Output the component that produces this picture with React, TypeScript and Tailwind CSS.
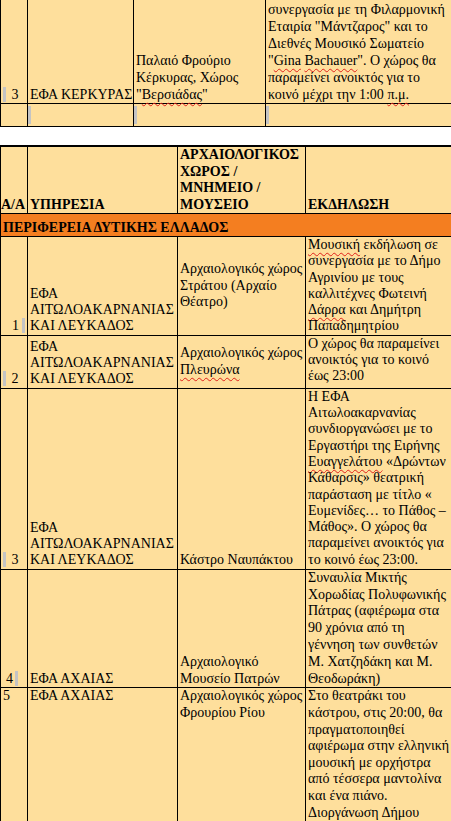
import { ReactNode } from "react";

const Sp = ({ children }: { children: ReactNode }) => (
    <span className="underline decoration-wavy decoration-[#e0201a] decoration-1 underline-offset-[3px]">{children}</span>
);

const Mark = () => <span className="inline-block w-[3px] h-[15px] bg-[#c4c4c4] align-[-3px]" />;

const Lines = ({ lines }: { lines: ReactNode[] }) => (
    <>
        {lines.map((l, i) => (
            <div key={i} className="whitespace-nowrap">
                {l}
            </div>
        ))}
    </>
);

const td = "border border-black px-[2px] py-0";

export default function App() {
    return (
        <div className="w-[451px] h-[821px] overflow-hidden bg-white text-black font-[family-name:Liberation_Serif,serif] text-[14px] leading-[16.3px]">
            {/* tail of previous table */}
            <table className="border-collapse table-fixed w-[458px] -mt-[17px] bg-[#fedf9c] leading-[17px]">
                <colgroup>
                    <col className="w-[27px]" />
                    <col className="w-[106px]" />
                    <col className="w-[132px]" />
                    <col className="w-[193px]" />
                </colgroup>
                <tbody>
                    <tr className="h-[120px]">
                        <td className={`${td} align-bottom whitespace-nowrap`}>
                            <Mark /> <span className="ml-[2px]">3</span>
                        </td>
                        <td className={`${td} align-bottom whitespace-nowrap`}>ΕΦΑ ΚΕΡΚΥΡΑΣ</td>
                        <td className={`${td} align-bottom`}>
                            <Lines lines={["Παλαιό Φρούριο", "Κέρκυρας, Χώρος", <>"<Sp>Βερσιάδας</Sp>"</>]} />
                        </td>
                        <td className={`${td} align-bottom`}>
                            <Lines
                                lines={[
                                    "Συναυλία στο Φρούριο, σε",
                                    "συνεργασία με τη Φιλαρμονική",
                                    'Εταιρία "Μάντζαρος" και το',
                                    "Διεθνές Μουσικό Σωματείο",
                                    <>"<Sp>Gina</Sp> <Sp>Bachauer</Sp>". Ο χώρος θα</>,
                                    "παραμείνει ανοικτός για το",
                                    <>κοινό μέχρι την 1:00 <Sp>π.μ.</Sp></>,
                                ]}
                            />
                        </td>
                    </tr>
                    <tr className="h-[23px]">
                        <td className="border border-black p-0"></td>
                        <td className="border border-black p-0 align-middle">
                            <div className="w-[3px] h-[18px] bg-[#c4c4c4]" />
                        </td>
                        <td className="border border-black p-0 align-middle">
                            <div className="w-[3px] h-[18px] bg-[#c4c4c4]" />
                        </td>
                        <td className="border border-black p-0 align-middle">
                            <div className="w-[3px] h-[18px] bg-[#c4c4c4]" />
                        </td>
                    </tr>
                </tbody>
            </table>

            <div className="h-[18px]" />

            <table className="border-collapse table-fixed w-[455px] bg-[#fedf9c] border-t-2 border-black">
                <colgroup>
                    <col className="w-[27px]" />
                    <col className="w-[150px]" />
                    <col className="w-[128px]" />
                    <col className="w-[150px]" />
                </colgroup>
                <tbody>
                    <tr className="h-[66px] font-bold leading-[16.5px]">
                        <td className="border border-black p-0 align-bottom whitespace-nowrap">Α/Α</td>
                        <td className={`${td} align-bottom`}>ΥΠΗΡΕΣΙΑ</td>
                        <td className={`${td} align-bottom`}>
                            <Lines lines={["ΑΡΧΑΙΟΛΟΓΙΚΟΣ", "ΧΩΡΟΣ /", "ΜΝΗΜΕΙΟ /", "ΜΟΥΣΕΙΟ"]} />
                        </td>
                        <td className={`${td} align-bottom`}>ΕΚΔΗΛΩΣΗ</td>
                    </tr>
                    <tr className="h-[23px] bg-[#f47e20] font-bold">
                        <td colSpan={4} className="border border-black px-[2px] py-0 align-bottom whitespace-nowrap">
                            ΠΕΡΙΦΕΡΕΙΑ ΔΥΤΙΚΗΣ ΕΛΛΑΔΟΣ
                        </td>
                    </tr>
                    <tr className="h-[98px]">
                        <td className={`${td} align-bottom text-right whitespace-nowrap`}>
                            1<span className="ml-[3px]"><Mark /></span>
                        </td>
                        <td className={`${td} align-bottom`}>
                            <Lines lines={["ΕΦΑ", "ΑΙΤΩΛΟΑΚΑΡΝΑΝΙΑΣ", "ΚΑΙ ΛΕΥΚΑΔΟΣ"]} />
                        </td>
                        <td className={`${td} align-middle`}>
                            <Lines lines={["Αρχαιολογικός χώρος", "Στράτου (Αρχαίο", "Θέατρο)"]} />
                        </td>
                        <td className={`${td} align-top`}>
                            <Lines
                                lines={[
                                    <><Sp>Μουσική</Sp> εκδήλωση σε</>,
                                    "συνεργασία με το Δήμο",
                                    "Αγρινίου με τους",
                                    "καλλιτέχνες Φωτεινή",
                                    <><Sp>Δάρρα</Sp> και Δημήτρη</>,
                                    "Παπαδημητρίου",
                                ]}
                            />
                        </td>
                    </tr>
                    <tr className="h-[53px]">
                        <td className={`${td} align-bottom whitespace-nowrap`}>
                            <Mark /> <span className="ml-[2px]">2</span>
                        </td>
                        <td className={`${td} align-bottom`}>
                            <Lines lines={["ΕΦΑ", "ΑΙΤΩΛΟΑΚΑΡΝΑΝΙΑΣ", "ΚΑΙ ΛΕΥΚΑΔΟΣ"]} />
                        </td>
                        <td className={`${td} align-middle`}>
                            <Lines lines={["Αρχαιολογικός χώρος", <Sp>Πλευρώνα</Sp>]} />
                        </td>
                        <td className={`${td} align-top`}>
                            <Lines lines={["Ο χώρος θα παραμείνει", "ανοικτός για το κοινό", "έως 23:00"]} />
                        </td>
                    </tr>
                    <tr className="h-[181px]">
                        <td className={`${td} align-bottom whitespace-nowrap`}>
                            <Mark /> <span className="ml-[2px]">3</span>
                        </td>
                        <td className={`${td} align-bottom`}>
                            <Lines lines={["ΕΦΑ", "ΑΙΤΩΛΟΑΚΑΡΝΑΝΙΑΣ", "ΚΑΙ ΛΕΥΚΑΔΟΣ"]} />
                        </td>
                        <td className={`${td} align-bottom whitespace-nowrap`}>Κάστρο Ναυπάκτου</td>
                        <td className={`${td} align-top`}>
                            <Lines
                                lines={[
                                    "Η ΕΦΑ",
                                    "Αιτωλοακαρνανίας",
                                    "συνδιοργανώσει με το",
                                    "Εργαστήρι της Ειρήνης",
                                    <><Sp>Ευαγγελάτου</Sp> «Δρώντων</>,
                                    "Κάθαρσις» θεατρική",
                                    "παράσταση με τίτλο «",
                                    "Ευμενίδες… το Πάθος –",
                                    "Μάθος». Ο χώρος θα",
                                    "παραμείνει ανοικτός για",
                                    "το κοινό έως 23:00.",
                                ]}
                            />
                        </td>
                    </tr>
                    <tr className="h-[118px] leading-[16.8px]">
                        <td className={`${td} align-bottom whitespace-nowrap`}>
                            <span className="ml-[3px]">4</span>
                            <span className="ml-[2px]"><Mark /></span>
                        </td>
                        <td className={`${td} align-bottom`}>ΕΦΑ ΑΧΑΙΑΣ</td>
                        <td className={`${td} align-bottom`}>
                            <Lines lines={["Αρχαιολογικό", "Μουσείο Πατρών"]} />
                        </td>
                        <td className={`${td} align-top`}>
                            <Lines
                                lines={[
                                    "Συναυλία Μικτής",
                                    "Χορωδίας Πολυφωνικής",
                                    "Πάτρας (αφιέρωμα στα",
                                    "90 χρόνια από τη",
                                    "γέννηση των συνθετών",
                                    "Μ. Χατζηδάκη και Μ.",
                                    "Θεοδωράκη)",
                                ]}
                            />
                        </td>
                    </tr>
                    <tr className="leading-[16.6px]">
                        <td className={`${td} align-top`}>5</td>
                        <td className={`${td} align-top`}>ΕΦΑ ΑΧΑΙΑΣ</td>
                        <td className={`${td} align-top`}>
                            <Lines lines={["Αρχαιολογικός χώρος", "Φρουρίου Ρίου"]} />
                        </td>
                        <td className={`${td} align-top`}>
                            <Lines
                                lines={[
                                    "Στο θεατράκι του",
                                    "κάστρου, στις 20:00, θα",
                                    "πραγματοποιηθεί",
                                    "αφιέρωμα στην ελληνική",
                                    "μουσική με ορχήστρα",
                                    "από τέσσερα μαντολίνα",
                                    "και ένα πιάνο.",
                                    "Διοργάνωση Δήμου",
                                ]}
                            />
                        </td>
                    </tr>
                </tbody>
            </table>
        </div>
    );
}
